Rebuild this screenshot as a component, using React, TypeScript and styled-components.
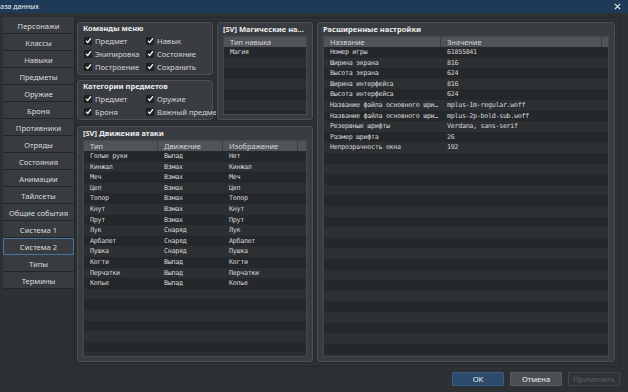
import React from 'react';
import styled, { createGlobalStyle } from 'styled-components';

const Global = createGlobalStyle`
  html, body { margin: 0; padding: 0; background: #2e3134; overflow: hidden; }
  #root { width: 628px; height: 392px; }
  * { box-sizing: border-box; }
`;

const Window = styled.div`
  width: 628px;
  height: 392px;
  display: flex;
  flex-direction: column;
  background: #2e3134;
  font-family: "Noto Sans", "Open Sans", sans-serif;
  color: #d6d6d6;
  overflow: hidden;
`;

const TitleBar = styled.div`
  height: 13px;
  flex-shrink: 0;
  background: #1d3b58;
  display: flex;
  align-items: center;
  justify-content: space-between;
  padding-right: 7px;
`;

const TitleText = styled.span`
  font-size: 7px;
  color: #f2f2f2;
  margin-left: -4px;
  line-height: 13px;
`;

const CloseIcon = styled.svg`
  width: 7px;
  height: 7px;
  display: block;
`;

const Body = styled.div`
  flex: 1;
  display: flex;
  padding: 4px 7px 0 2px;
  min-height: 0;
`;

const Sidebar = styled.div`
  width: 72px;
  flex-shrink: 0;
  display: flex;
  flex-direction: column;
  padding-left: 1px;
`;

const Tab = styled.div<{ $active?: boolean }>`
  height: 17px;
  display: flex;
  align-items: center;
  justify-content: center;
  font-size: 7.6px;
  color: #dcdcdc;
  background: ${p => (p.$active ? '#393d41' : '#383b3f')};
  border: 1px solid ${p => (p.$active ? '#4677a2' : 'transparent')};
  border-bottom: 1px solid ${p => (p.$active ? '#4677a2' : '#222528')};
  white-space: nowrap;
`;

const Frame = styled.div`
  flex: 1;
  height: 350px;
  border: 1px solid #25282b;
  padding: 4px 5px 4px 2px;
  display: grid;
  grid-template-columns: 136px 96px 1fr;
  grid-template-rows: 98px 1fr;
  column-gap: 4px;
  row-gap: 6px;
`;

const LeftStack = styled.div`
  display: flex;
  flex-direction: column;
  gap: 5px;
  min-height: 0;
`;

const Box = styled.div<{ $col?: string; $row?: string; $h?: number }>`
  grid-column: ${p => p.$col || 'auto'};
  grid-row: ${p => p.$row || 'auto'};
  ${p => (p.$h ? `height: ${p.$h}px; flex-shrink: 0;` : 'flex: 1;')}
  background: #393c40;
  border: 1px solid #4d5054;
  border-radius: 3px;
  box-shadow: 0 0 0 1px #292c2f;
  display: flex;
  flex-direction: column;
  padding: 0 5px 4px 5px;
  min-height: 0;
  min-width: 0;
`;

const BoxTitle = styled.div<{ $h: number }>`
  height: ${p => p.$h}px;
  line-height: ${p => p.$h}px;
  flex-shrink: 0;
  font-size: 7.5px;
  font-weight: 700;
  color: #ededed;
  white-space: nowrap;
  overflow: hidden;
  text-overflow: ellipsis;
`;

const CheckGrid = styled.div`
  display: grid;
  grid-template-columns: 62px auto;
  grid-auto-rows: 13px;
  padding-left: 1px;
`;

const CheckItem = styled.div`
  display: flex;
  align-items: center;
  gap: 3px;
  font-size: 7.6px;
  color: #d4d4d4;
  white-space: nowrap;
`;

const CheckBoxSq = styled.span`
  width: 8px;
  height: 8px;
  flex-shrink: 0;
  background: #1d2023;
  border-radius: 1px;
  display: flex;
  align-items: center;
  justify-content: center;
`;

const Table = styled.div`
  flex: 1;
  min-height: 0;
  border: 1px solid #46494d;
  display: flex;
  flex-direction: column;
  overflow: hidden;
`;

const Head = styled.div<{ $cols: string }>`
  height: 10px;
  flex-shrink: 0;
  display: grid;
  grid-template-columns: ${p => p.$cols};
  background: #505357;
`;

const HeadCell = styled.div`
  font-size: 7.4px;
  line-height: 10px;
  color: #d8d8d8;
  padding-left: 6px;
  border-right: 1px solid #3b3e42;
  white-space: nowrap;
  overflow: hidden;
  &:last-child { border-right: none; }
`;

const Rows = styled.div`
  flex: 1;
  background: repeating-linear-gradient(
    to bottom,
    #25282b 0px,
    #25282b 10.6px,
    #2c3033 10.6px,
    #2c3033 21.2px
  );
`;

const Row = styled.div<{ $cols: string }>`
  height: 10.6px;
  display: grid;
  grid-template-columns: ${p => p.$cols};
`;

const Cell = styled.div`
  font-family: "DejaVu Sans Mono", "Liberation Mono", monospace;
  font-size: 6.7px;
  letter-spacing: -0.3px;
  line-height: 10.6px;
  color: #d6d6d6;
  padding-left: 6px;
  white-space: nowrap;
  overflow: hidden;
  text-overflow: ellipsis;
`;

const Footer = styled.div`
  height: 25px;
  flex-shrink: 0;
  display: flex;
  align-items: center;
  justify-content: flex-end;
  padding: 0 8px 1px 0;
  gap: 6px;
`;

const Button = styled.div<{ $variant: 'primary' | 'normal' | 'disabled' }>`
  width: 52px;
  height: 14px;
  display: flex;
  align-items: center;
  justify-content: center;
  font-size: 7.6px;
  border-radius: 1px;
  background: ${p =>
    p.$variant === 'primary' ? '#2c4a6c' : p.$variant === 'normal' ? '#4b4e52' : '#313437'};
  border: 1px solid
    ${p => (p.$variant === 'primary' ? '#3c5d82' : p.$variant === 'normal' ? '#585b5f' : '#414448')};
  color: ${p => (p.$variant === 'disabled' ? '#5b5e62' : '#f0f0f0')};
`;

const tabs = [
  'Персонажи', 'Классы', 'Навыки', 'Предметы', 'Оружие', 'Броня', 'Противники', 'Отряды',
  'Состояния', 'Анимации', 'Тайлсеты', 'Общие события', 'Система 1', 'Система 2', 'Типы', 'Термины',
];

const Check = ({ label }: { label: string }) => (
  <CheckItem>
    <CheckBoxSq>
      <svg width="7" height="7" viewBox="0 0 8 8">
        <polyline points="1.2,4.2 3.1,6.2 6.8,1.4" fill="none" stroke="#f4f4f4" strokeWidth="1.5" />
      </svg>
    </CheckBoxSq>
    {label}
  </CheckItem>
);

const attackCols = '74px 65px 75px 1fr';
const attack = [
  ['Голые руки', 'Выпад', 'Нет'],
  ['Кинжал', 'Взмах', 'Кинжал'],
  ['Меч', 'Взмах', 'Меч'],
  ['Цеп', 'Взмах', 'Цеп'],
  ['Топор', 'Взмах', 'Топор'],
  ['Кнут', 'Взмах', 'Кнут'],
  ['Прут', 'Взмах', 'Прут'],
  ['Лук', 'Снаряд', 'Лук'],
  ['Арбалет', 'Снаряд', 'Арбалет'],
  ['Пушка', 'Снаряд', 'Пушка'],
  ['Когти', 'Выпад', 'Когти'],
  ['Перчатки', 'Выпад', 'Перчатки'],
  ['Копье', 'Выпад', 'Копье'],
];

const settingsCols = '117px 161px 1fr';
const settings = [
  ['Номер игры', '61855841'],
  ['Ширина экрана', '816'],
  ['Высота экрана', '624'],
  ['Ширина интерфейса', '816'],
  ['Высота интерфейса', '624'],
  ['Название файла основного шрифта', 'mplus-1m-regular.woff'],
  ['Название файла основного шрифта', 'mplus-2p-bold-sub.woff'],
  ['Резервные шрифты', 'Verdana, sans-serif'],
  ['Размер шрифта', '26'],
  ['Непрозрачность окна', '192'],
];

export default function App() {
  return (
    <>
      <Global />
      <Window>
        <TitleBar>
          <TitleText>База данных</TitleText>
          <CloseIcon viewBox="0 0 7 7">
            <path d="M0.8 0.8 L6.2 6.2 M6.2 0.8 L0.8 6.2" stroke="#e6e6e6" strokeWidth="1.2" />
          </CloseIcon>
        </TitleBar>
        <Body>
          <Sidebar>
            {tabs.map(t => (
              <Tab key={t} $active={t === 'Система 2'}>{t}</Tab>
            ))}
          </Sidebar>
          <Frame>
            <LeftStack>
              <Box $h={53}>
                <BoxTitle $h={11}>Команды меню</BoxTitle>
                <CheckGrid>
                  <Check label="Предмет" />
                  <Check label="Навык" />
                  <Check label="Экипировка" />
                  <Check label="Состояние" />
                  <Check label="Построение" />
                  <Check label="Сохранить" />
                </CheckGrid>
              </Box>
              <Box>
                <BoxTitle $h={11}>Категории предметов</BoxTitle>
                <CheckGrid>
                  <Check label="Предмет" />
                  <Check label="Оружие" />
                  <Check label="Броня" />
                  <Check label="Важный предмет" />
                </CheckGrid>
              </Box>
            </LeftStack>
            <Box>
              <BoxTitle $h={13}>[SV] Магические навыки</BoxTitle>
              <Table>
                <Head $cols="1fr">
                  <HeadCell>Тип навыка</HeadCell>
                </Head>
                <Rows>
                  <Row $cols="1fr">
                    <Cell>Магия</Cell>
                  </Row>
                </Rows>
              </Table>
            </Box>
            <Box $col="3" $row="1 / 3">
              <BoxTitle $h={13}>Расширенные настройки</BoxTitle>
              <Table>
                <Head $cols={settingsCols}>
                  <HeadCell>Название</HeadCell>
                  <HeadCell>Значение</HeadCell>
                  <HeadCell />
                </Head>
                <Rows>
                  {settings.map((r, i) => (
                    <Row key={i} $cols={settingsCols}>
                      <Cell>{r[0]}</Cell>
                      <Cell>{r[1]}</Cell>
                    </Row>
                  ))}
                </Rows>
              </Table>
            </Box>
            <Box $col="1 / 3" $row="2">
              <BoxTitle $h={13}>[SV] Движения атаки</BoxTitle>
              <Table>
                <Head $cols={attackCols}>
                  <HeadCell>Тип</HeadCell>
                  <HeadCell>Движение</HeadCell>
                  <HeadCell>Изображение</HeadCell>
                  <HeadCell />
                </Head>
                <Rows>
                  {attack.map((r, i) => (
                    <Row key={i} $cols={attackCols}>
                      <Cell>{r[0]}</Cell>
                      <Cell>{r[1]}</Cell>
                      <Cell>{r[2]}</Cell>
                    </Row>
                  ))}
                </Rows>
              </Table>
            </Box>
          </Frame>
        </Body>
        <Footer>
          <Button $variant="primary">OK</Button>
          <Button $variant="normal">Отмена</Button>
          <Button $variant="disabled">Применить</Button>
        </Footer>
      </Window>
    </>
  );
}
